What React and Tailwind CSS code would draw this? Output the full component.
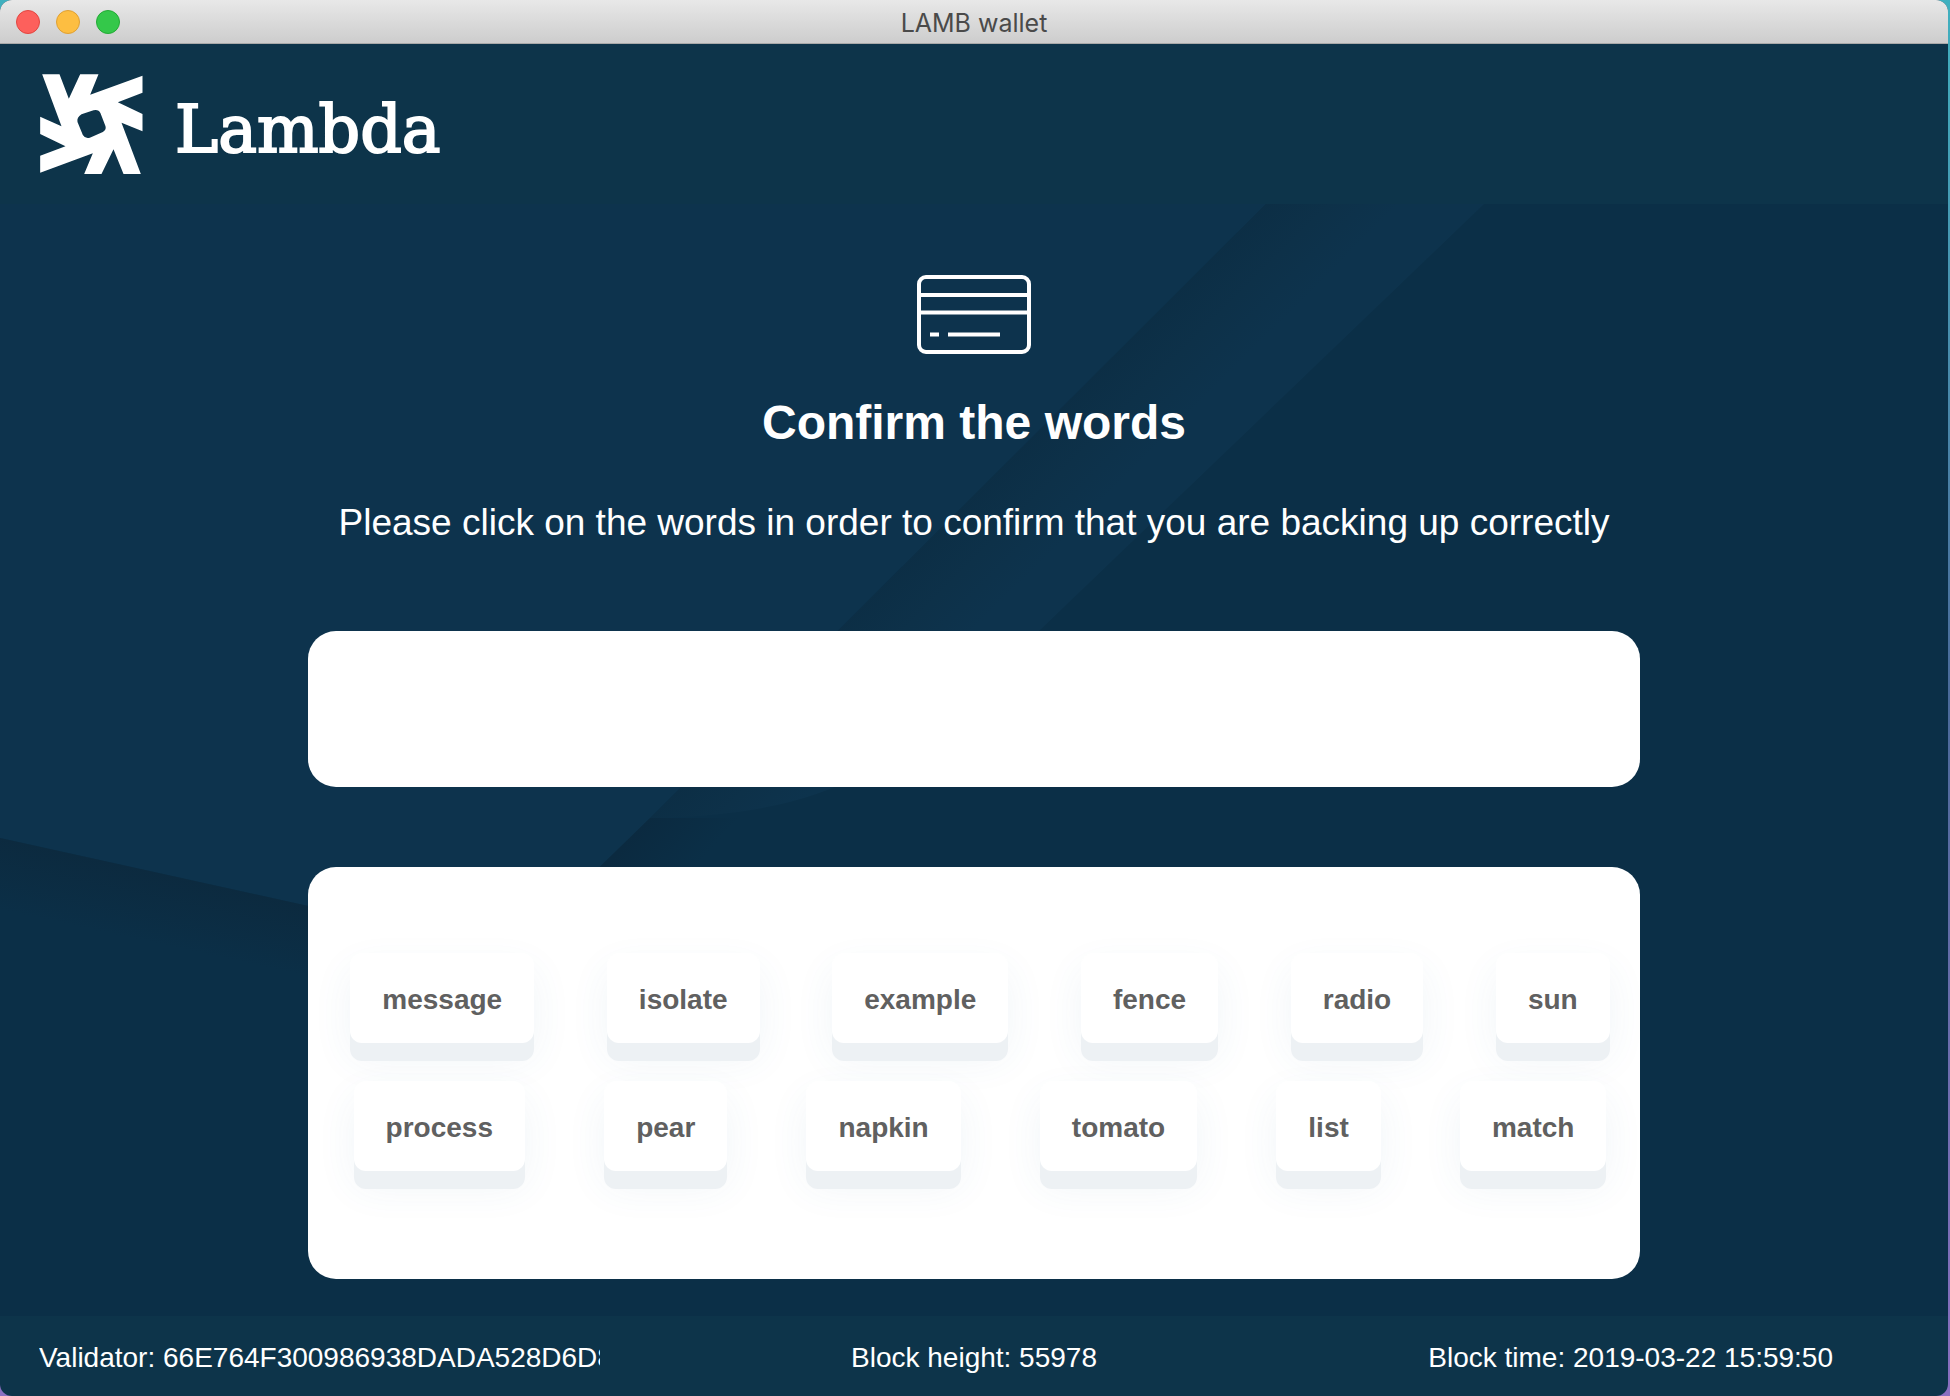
const rows = [
  ["message", "isolate", "example", "fence", "radio", "sun"],
  ["process", "pear", "napkin", "tomato", "list", "match"],
];

function Backdrop() {
  return (
    <svg
      className="absolute inset-0 -z-10 h-full w-full"
      viewBox="0 0 1948 1112"
      preserveAspectRatio="none"
      aria-hidden="true"
    >
      <defs>
        <linearGradient id="fold" gradientUnits="userSpaceOnUse" x1="1050" y1="210" x2="1120" y2="280">
          <stop offset="0" stopColor="#0c2e45" />
          <stop offset="0.5" stopColor="#0d3149" />
          <stop offset="1" stopColor="#0d334d" />
        </linearGradient>
        <linearGradient id="ledge" gradientUnits="userSpaceOnUse" x1="150" y1="666" x2="135" y2="735">
          <stop offset="0" stopColor="#0c2a3f" />
          <stop offset="1" stopColor="#0b2f47" />
        </linearGradient>
        <linearGradient id="crease" gradientUnits="userSpaceOnUse" x1="630" y1="635" x2="680" y2="680">
          <stop offset="0" stopColor="#0b2a40" />
          <stop offset="1" stopColor="#0b2f47" />
        </linearGradient>
      </defs>
      <rect width="1948" height="1112" fill="#0b2f47" />
      <path d="M0 0H1266L600 664L480 740L0 634Z" fill="#0d334d" />
      <path d="M1266 0H1484L1040 426L860 570Q790 612 650 614L600 664Z" fill="url(#fold)" />
      <path d="M650 614H780L640 740H520Z" fill="url(#crease)" />
      <path d="M0 634L480 740V840L0 740Z" fill="url(#ledge)" />
    </svg>
  );
}

function LambdaMark() {
  return (
    <svg className="h-[100px] w-[103px]" viewBox="30 42 308 300" fill="#fff" aria-hidden="true">
      <path
        fillRule="evenodd"
        d="M36 43H88L116 116L150 43H205L180 104L337 47V98L263 127L337 162V214L274 188L332 342H280L250 268L214 342H162L188 280L30 338V287L106 259L30 222V170L94 199Z
           M154 163L190 151Q205 147 211 160L226 199Q229 210 218 216L179 233Q165 237 158 225L142 186Q139 173 154 163Z"
      />
    </svg>
  );
}

function CardIcon() {
  return (
    <svg className="h-20 w-[114px]" viewBox="0 0 114 80" fill="none" stroke="#fff" strokeWidth="4" aria-hidden="true">
      <rect x="2" y="2" width="110" height="75" rx="7" />
      <path d="M2 20H112M2 37.500H112M13 59.500H22M31 59.500H83" />
    </svg>
  );
}

export default function App() {
  return (
    <div className="bg-linear-to-b from-[#3fb0bf] via-[#4a6a9a] to-[#8a6fc0] pr-0.5 font-['Liberation_Sans',sans-serif]">
      <div className="flex min-h-screen flex-col overflow-hidden rounded-xl bg-[#0d344a]">
        <div className="grid h-11 grid-cols-3 items-center border-b border-[#a9a9a9] bg-linear-to-b from-[#e8e8e8] to-[#cdcdcd] px-4">
          <div className="flex gap-4">
            <button aria-label="Close" className="size-6 rounded-full border border-[#e24640] bg-[#fd605c]" />
            <button aria-label="Minimize" className="size-6 rounded-full border border-[#dfa033] bg-[#fdbe41]" />
            <button aria-label="Zoom" className="size-6 rounded-full border border-[#23aa35] bg-[#34c84a]" />
          </div>
          <div className="pt-0.5 text-center font-[Inter,sans-serif] text-[25px] leading-8 text-[#4a4a4a]">LAMB wallet</div>
        </div>

        <header className="flex h-40 items-center px-10">
          <a href="#" className="flex items-center gap-8 text-white">
            <LambdaMark />
            <span className="pt-3 font-['DejaVu_Serif',serif] text-[65px] leading-20 [-webkit-text-stroke:2px_white]">
              Lambda
            </span>
          </a>
        </header>

        <main className="relative isolate flex grow flex-col items-center px-20 pt-[71px] pb-9">
          <Backdrop />
          <CardIcon />
          <h1 className="mt-9 text-5xl leading-16 font-bold text-white">Confirm the words</h1>
          <p className="mt-11 text-[37px] leading-12 text-white">
            Please click on the words in order to confirm that you are backing up correctly
          </p>
          <div className="mt-21 h-39 w-full max-w-[1332px] rounded-[28px] bg-white" />
          <div className="mt-20 flex w-full max-w-[1332px] flex-col gap-[38px] rounded-[28px] bg-white pt-[86px] pb-[108px]">
            {rows.map((row) => (
              <div key={row[0]} className="flex justify-around">
                {row.map((word) => (
                  <button
                    key={word}
                    className="ml-3 rounded-xl bg-white px-8 pt-[26px] pb-[22px] text-[28px] leading-[42px] font-bold text-[#606060] shadow-[0_18px_0_#edf1f4,0_16px_40px_rgba(60,110,150,0.07)]"
                  >
                    {word}
                  </button>
                ))}
              </div>
            ))}
          </div>
        </main>

        <footer className="grid h-20 grid-cols-[1fr_auto_1fr] items-center px-[39px] pt-1 text-[28px] leading-10 text-white">
          <div className="w-[561px] overflow-hidden whitespace-nowrap">Validator: 66E764F300986938DADA528D6D8</div>
          <div>Block height: 55978</div>
          <div className="justify-self-end pr-[76px]">Block time: 2019-03-22 15:59:50</div>
        </footer>
      </div>
    </div>
  );
}
